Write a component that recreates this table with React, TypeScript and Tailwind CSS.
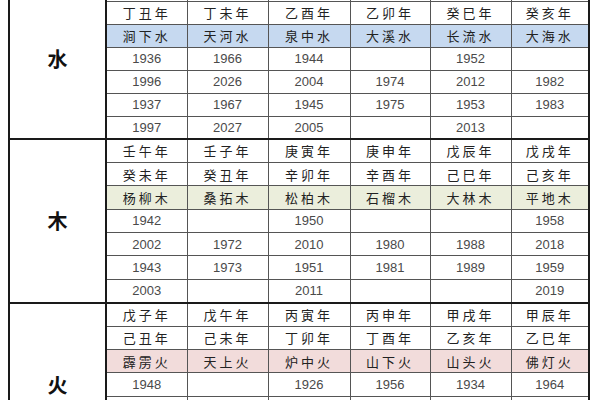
type Group = {
  name: string;
  first: string[];
  second: string[];
  nayin: string[];
  bg: string;
  h: string;
  years: string[][];
};

const groups: Group[] = [
  {
    name: "水",
    // first row sits above the visible area
    first: ["", "", "", "", "", ""],
    second: ["丁丑年", "丁未年", "乙酉年", "乙卯年", "癸巳年", "癸亥年"],
    nayin: ["涧下水", "天河水", "泉中水", "大溪水", "长流水", "大海水"],
    bg: "bg-[#c6d9f0]",
    h: "h-[23px]",
    years: [
      ["1936", "1966", "1944", "", "1952", ""],
      ["1996", "2026", "2004", "1974", "2012", "1982"],
      ["1937", "1967", "1945", "1975", "1953", "1983"],
      ["1997", "2027", "2005", "", "2013", ""],
    ],
  },
  {
    name: "木",
    first: ["壬午年", "壬子年", "庚寅年", "庚申年", "戊辰年", "戊戌年"],
    second: ["癸未年", "癸丑年", "辛卯年", "辛酉年", "己巳年", "己亥年"],
    nayin: ["杨柳木", "桑拓木", "松柏木", "石榴木", "大林木", "平地木"],
    bg: "bg-[#ebeedc]",
    h: "h-[23.4px]",
    years: [
      ["1942", "", "1950", "", "", "1958"],
      ["2002", "1972", "2010", "1980", "1988", "2018"],
      ["1943", "1973", "1951", "1981", "1989", "1959"],
      ["2003", "", "2011", "", "", "2019"],
    ],
  },
  {
    name: "火",
    first: ["戊子年", "戊午年", "丙寅年", "丙申年", "甲戌年", "甲辰年"],
    second: ["己丑年", "己未年", "丁卯年", "丁酉年", "乙亥年", "乙巳年"],
    nayin: ["霹雳火", "天上火", "炉中火", "山下火", "山头火", "佛灯火"],
    bg: "bg-[#f2dcdb]",
    h: "h-[23.4px]",
    years: [
      ["1948", "", "1926", "1956", "1934", "1964"],
      ["2008", "1978", "1986", "2016", "1994", "2024"],
      ["1949", "1979", "1927", "1957", "1935", "1965"],
      ["2009", "", "1987", "2017", "1995", "2025"],
    ],
  },
];

const widths = ["w-[97px]", "w-[81px]", "w-[81px]", "w-[82px]", "w-[80px]", "w-[81px]", "w-[78px]"];

const cjk = "font-['Noto_Sans_CJK_SC',sans-serif]";

function TextRow({ cells, h, bg, top }: { cells: string[]; h: string; bg?: string; top?: boolean }) {
  return (
    <>
      {cells.map((c, i) => (
        <td
          key={i}
          className={`${h} p-0 text-center border border-[#555] ${top ? "border-t-2 border-t-[#1a1a1a]" : ""} ${i === 5 ? "border-r-2 border-r-[#1a1a1a]" : ""} ${bg ?? ""} ${cjk} text-[13px] leading-none tracking-[3px] text-[#222]`}
        >
          {c}
        </td>
      ))}
    </>
  );
}

function YearRow({ cells, h }: { cells: string[]; h: string }) {
  return (
    <>
      {cells.map((c, i) => (
        <td
          key={i}
          className={`${h} p-0 text-center border border-[#555] ${i === 5 ? "border-r-2 border-r-[#1a1a1a]" : ""} font-['Liberation_Sans',sans-serif] text-[13px] leading-none text-[#4a4a4a]`}
        >
          {c}
        </td>
      ))}
    </>
  );
}

export default function App() {
  return (
    <div className="h-[400px] w-[600px] overflow-hidden bg-white">
      <table className="ml-[8px] -mt-[23px] table-fixed border-collapse w-[580px]">
        <colgroup>
          {widths.map((w, i) => (
            <col key={i} className={w} />
          ))}
        </colgroup>
        <tbody>
          {groups.map((g) => (
            <>
              <tr key={g.name + "a"}>
                <td
                  rowSpan={7}
                  className={`p-0 text-center align-middle border-2 border-[#1a1a1a] ${cjk} text-[20px] font-bold text-[#111]`}
                >
                  {g.name}
                </td>
                <TextRow cells={g.first} h={g.h} top />
              </tr>
              <tr key={g.name + "b"}>
                <TextRow cells={g.second} h={g.h} />
              </tr>
              <tr key={g.name + "c"}>
                <TextRow cells={g.nayin} h={g.h} bg={g.bg} />
              </tr>
              {g.years.map((y, j) => (
                <tr key={g.name + j}>
                  <YearRow cells={y} h={g.h} />
                </tr>
              ))}
            </>
          ))}
        </tbody>
      </table>
    </div>
  );
}
